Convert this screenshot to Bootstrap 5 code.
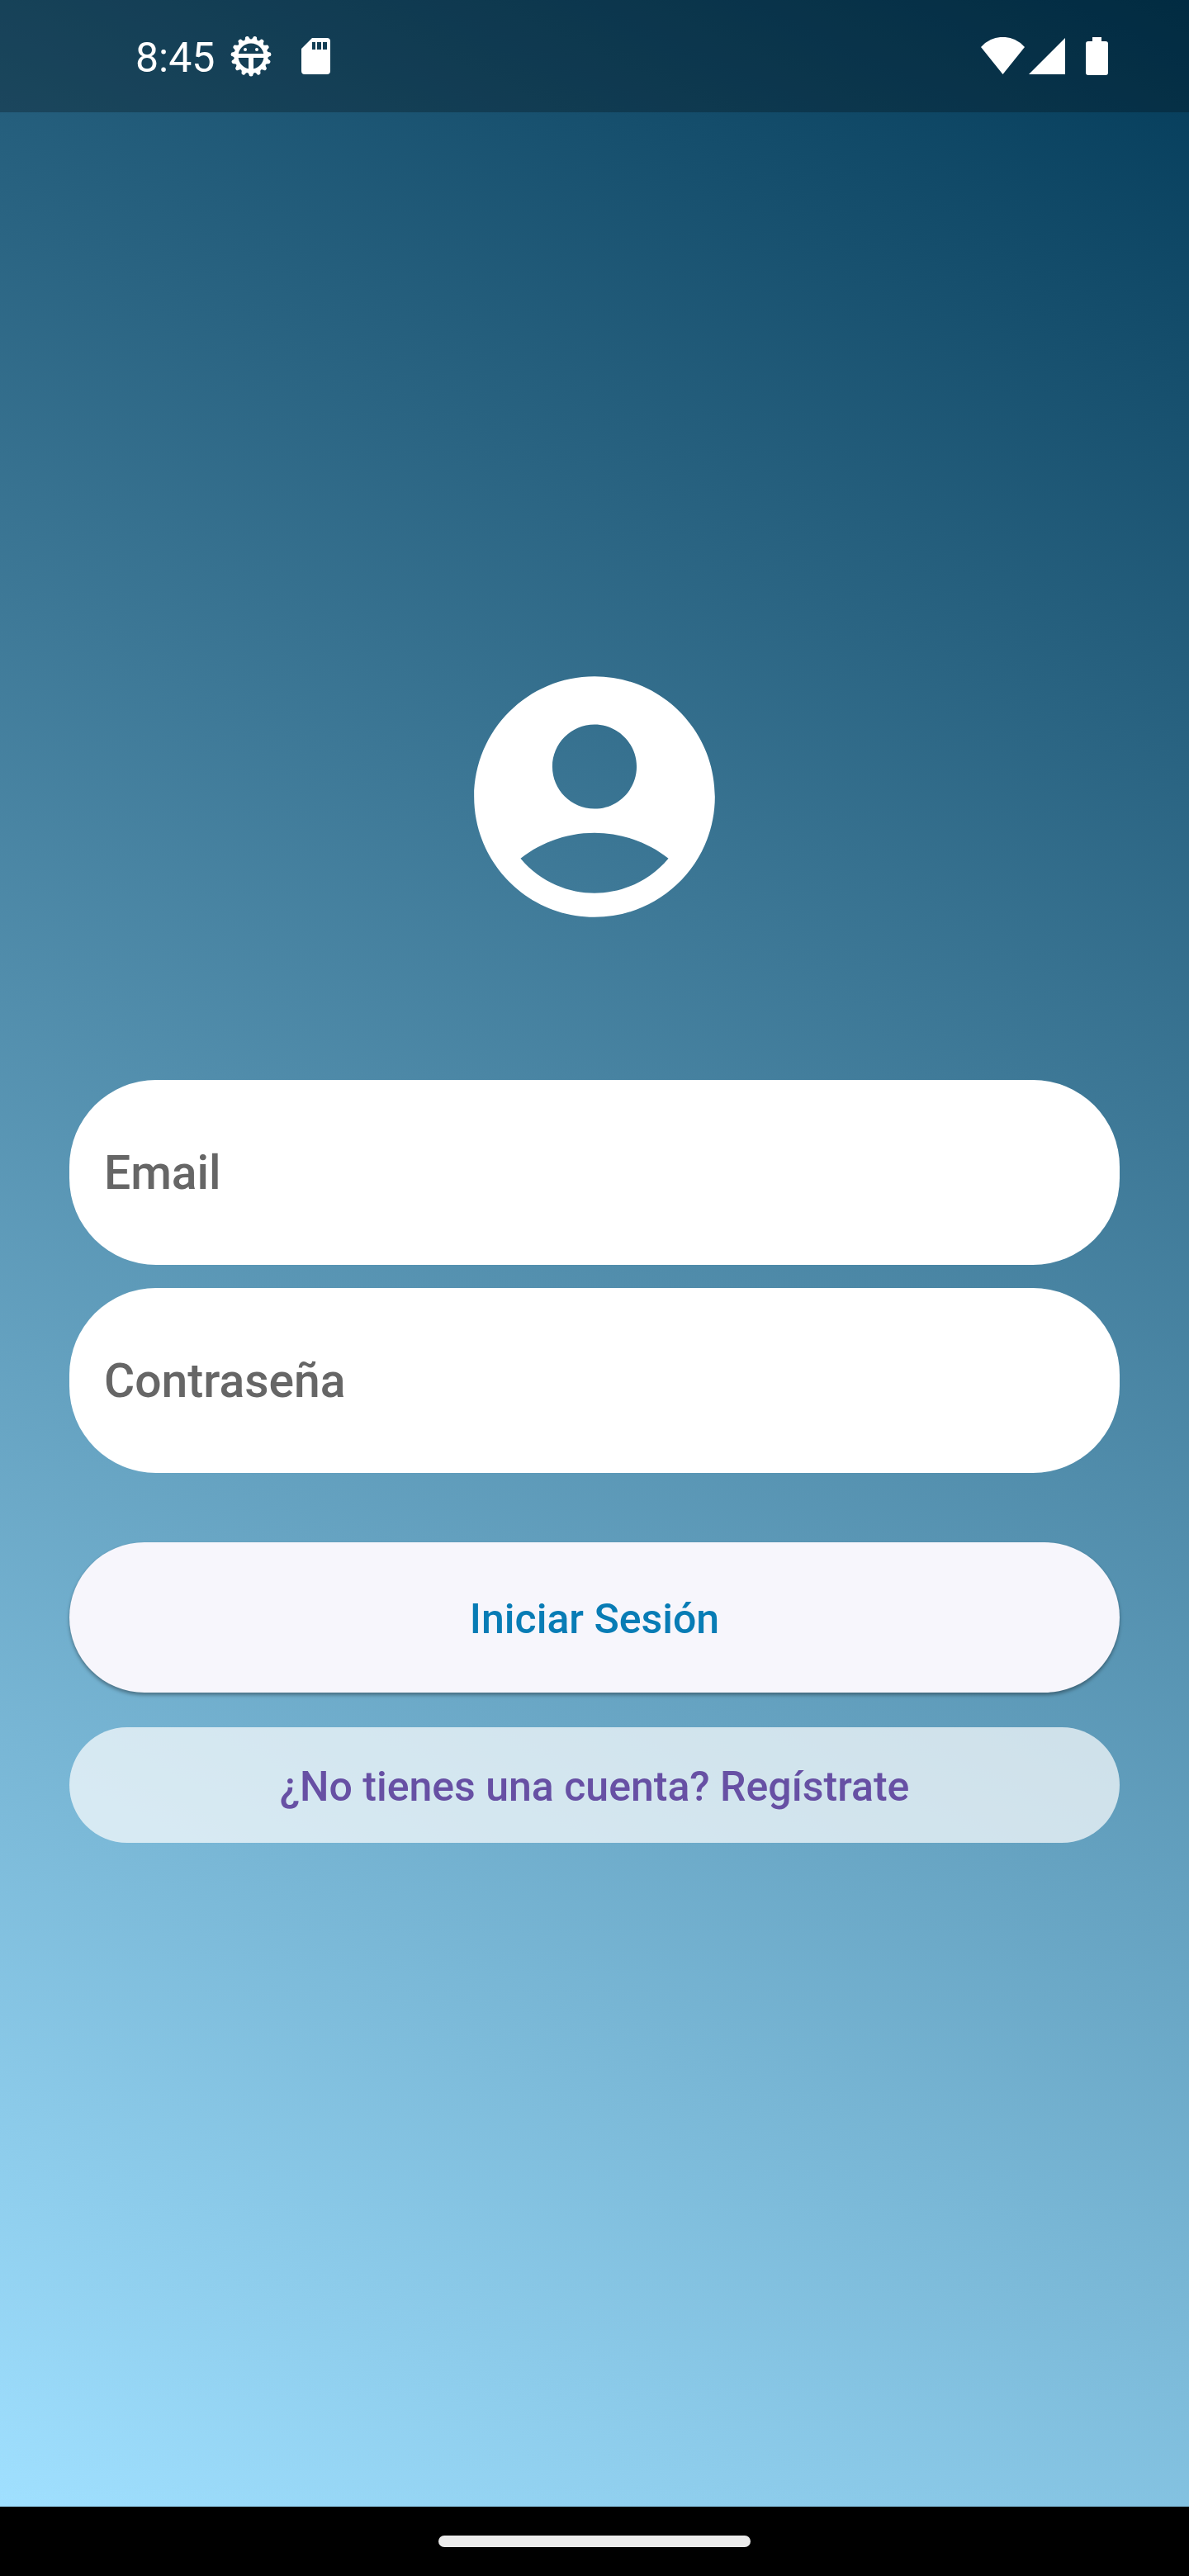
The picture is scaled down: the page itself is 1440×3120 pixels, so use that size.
<!DOCTYPE html>
<html lang="es">
<head>
<meta charset="utf-8">
<meta name="viewport" content="width=device-width, initial-scale=1">
<title>Iniciar Sesión</title>
<link href="https://cdn.jsdelivr.net/npm/bootstrap@5.3.0/dist/css/bootstrap.min.css" rel="stylesheet">
<style>
body { font-family: Roboto, "Noto Sans", sans-serif; background: #000; }
.login-screen { background: linear-gradient(205deg, #023a58, #a0e0ff); }
.status-bar { height: 136px; padding: 0 98px 0 164px; background: rgba(0, 0, 0, .25); color: #fff; }
.status-time { font-size: 50px; line-height: 56px; padding-top: 4px; }
.status-bar svg { display: block; fill: currentColor; }
.login-form { padding: 0 84px 150px; }
.avatar { width: 350px; height: 350px; fill: #fff; margin-bottom: 168px; }
.login-form .field { height: 224px; padding: 0 42px; border: 0; border-radius: 105px; background: #fff; font-size: 57px; font-weight: 500; line-height: 84px; }
.login-form .field::placeholder { color: #666; opacity: 1; }
.gap-fields { gap: 28px; }
.gap-actions { gap: 42px; margin-top: 84px; }
.login-form .btn { padding: 8px 12px 4px; border: 0; border-radius: 91px; font-size: 50px; font-weight: 500; line-height: 70px; }
.login-form .btn-login { height: 182px; background: #f7f6fc; color: #087cb5; box-shadow: 0 3px 4px rgba(0, 0, 0, .35); }
.login-form .btn-register { height: 140px; background: rgba(255, 255, 255, .7); color: #6750a4; }
.nav-strip { height: 84px; }
.nav-handle { width: 378px; height: 14px; background: #ebebeb; }
</style>
</head>
<body>
<div class="d-flex flex-column min-vh-100">
  <div class="login-screen d-flex flex-column flex-grow-1">
    <header class="status-bar d-flex align-items-center justify-content-between">
      <div class="d-flex align-items-center">
        <span class="status-time">8:45</span>
        <svg class="ms-3" id="gear-icon" width="56" height="56" viewBox="-28 -28 56 56" aria-hidden="true"></svg>
        <svg class="ms-4" width="56" height="56" viewBox="1 0 56 56" aria-hidden="true"><path fill-rule="evenodd" d="M23 6H41a4 4 0 0 1 4 4V46a4 4 0 0 1-4 4H14a4 4 0 0 1-4-4V19zM23 11v9h4v-9zM29 11v9h5v-9zM36 11v9h5v-9z"/></svg>
      </div>
      <div class="d-flex align-items-center">
        <svg width="54" height="46" viewBox="-1 0 54 46" aria-hidden="true"><path d="M0 12A35 35 0 0 1 53 12L26.500 45z"/></svg>
        <svg class="ms-1" width="46" height="46" viewBox="-1 0 46 46" aria-hidden="true"><path d="M0 45L44 1V45z"/></svg>
        <svg class="ms-4" width="27" height="46" viewBox="1 0 27 46" aria-hidden="true"><path d="M9 0H20V5H25a3 3 0 0 1 3 3V43a3 3 0 0 1-3 3H4a3 3 0 0 1-3-3V8a3 3 0 0 1 3-3H9z"/></svg>
      </div>
    </header>
    <main class="login-form flex-grow-1 d-flex flex-column justify-content-center">
      <svg class="avatar align-self-center" viewBox="0 0 24 24" aria-hidden="true"><path d="M12 2C6.480 2 2 6.480 2 12s4.480 10 10 10 10-4.480 10-10S17.520 2 12 2zm0 4c1.930 0 3.500 1.570 3.500 3.500S13.930 13 12 13s-3.500-1.570-3.500-3.500S10.070 6 12 6zm0 14c-2.030 0-4.430-.82-6.140-2.880C7.550 15.800 9.680 15 12 15s4.450.8 6.140 2.120C16.430 19.180 14.030 20 12 20z"/></svg>
      <form>
        <div class="d-flex flex-column gap-fields">
          <input class="form-control field" id="email" type="email" placeholder="Email" aria-label="Email">
          <input class="form-control field" id="password" type="password" placeholder="Contraseña" aria-label="Contraseña">
        </div>
        <div class="d-flex flex-column gap-actions">
          <button class="btn btn-login" type="submit">Iniciar Sesión</button>
          <button class="btn btn-register" type="button">¿No tienes una cuenta? Regístrate</button>
        </div>
      </form>
    </main>
  </div>
  <footer class="nav-strip d-flex align-items-center justify-content-center">
    <div class="nav-handle rounded-pill"></div>
  </footer>
</div>
<script src="https://cdn.jsdelivr.net/npm/bootstrap@5.3.0/dist/js/bootstrap.bundle.min.js"></script>
<script>
// Gear with fifteen rounded teeth around a ring, crossed by a T-shaped bar
const teeth = Array.from({ length: 15 }, (_, i) =>
  `<path d="M-5 18L-2.500 22A2.500 2.500 0 0 0 2.500 22L5 18z" transform="rotate(${i * 24})"/>`).join('');
document.getElementById('gear-icon').innerHTML = teeth +
  '<circle r="18" fill="none" stroke="currentColor" stroke-width="5"/>' +
  '<path d="M-17 -3H17V2H3V17H-3V2H-17z"/><circle cx="-7" cy="-8" r="2"/><circle cx="7" cy="-8" r="2"/>';
</script>
</body>
</html>
